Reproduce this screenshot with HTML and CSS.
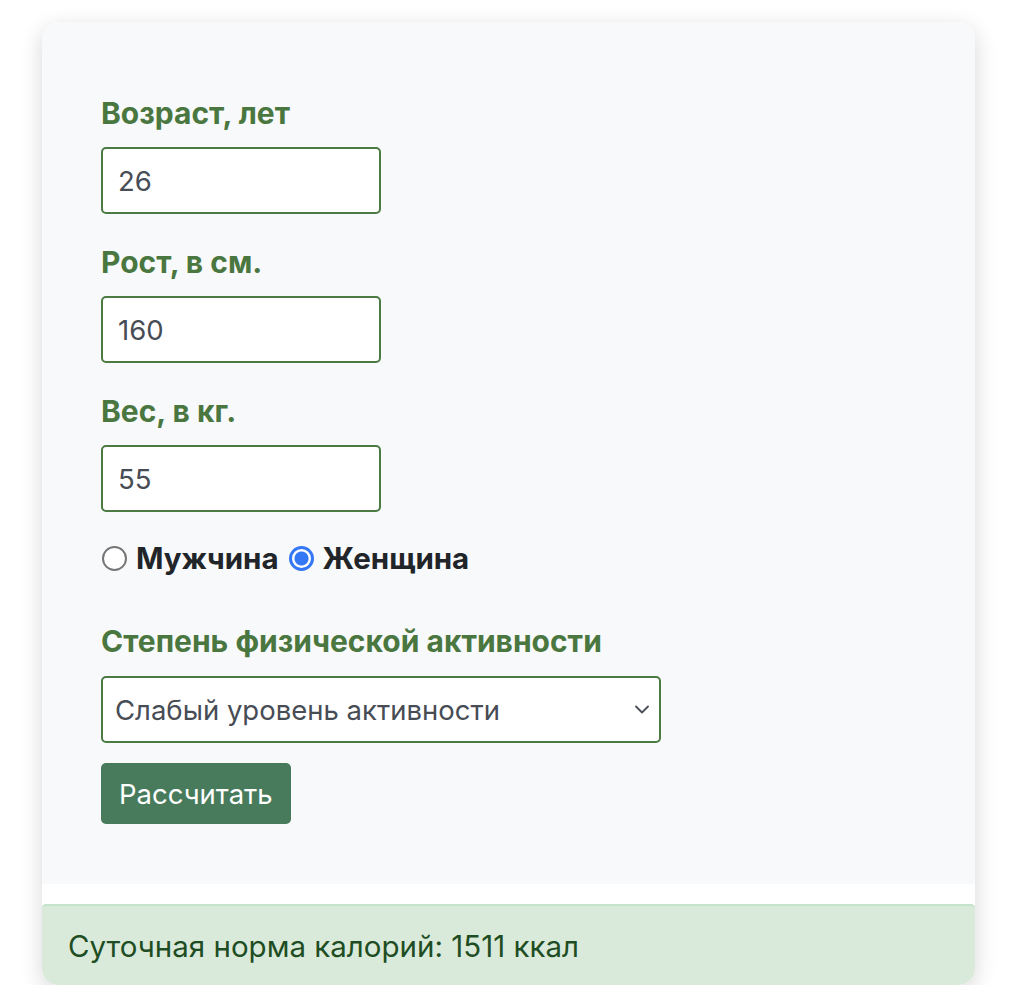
FILE: index.html
```html
<!DOCTYPE html>
<html lang="ru">
<head>
<meta charset="utf-8">
<title>Калькулятор калорий</title>
<link rel="stylesheet" href="styles.css">
</head>
<body>
<div class="card">
  <form class="form">
    <div class="field">
      <label class="label" for="age">Возраст, лет</label>
      <input class="input" id="age" type="text" value="26">
    </div>
    <div class="field">
      <label class="label" for="height">Рост, в см.</label>
      <input class="input" id="height" type="text" value="160">
    </div>
    <div class="field">
      <label class="label" for="weight">Вес, в кг.</label>
      <input class="input" id="weight" type="text" value="55">
    </div>
    <div class="gender">
      <label class="radio"><span class="dot"></span>Мужчина</label>
      <label class="radio"><span class="dot checked"></span>Женщина</label>
    </div>
    <div class="field activity">
      <label class="label" for="act">Степень физической активности</label>
      <div class="select">
        <span>Слабый уровень активности</span>
        <svg class="chev" width="14" height="9" viewBox="0 0 14 9"><path d="M1 1.5 L7 7.5 L13 1.5" fill="none" stroke="#4a4f57" stroke-width="1.8" stroke-linecap="round" stroke-linejoin="round"/></svg>
      </div>
    </div>
    <button class="btn" type="button">Рассчитать</button>
  </form>
  <div class="spacer"></div>
  <div class="alert">Суточная норма калорий: 1511 ккал</div>
</div>
</body>
</html>
```
FILE: styles.css
```css
html, body {
  margin: 0;
  padding: 0;
  background: #ffffff;
}
body {
  font-family: Inter, "Liberation Sans", Arial, sans-serif;
  padding: 22px 43px 0 42px;
}
.card {
  width: 933px;
  border-radius: 16px;
  overflow: hidden;
  box-shadow: 0 6px 22px rgba(0, 0, 0, 0.16);
  background: #ffffff;
}
.form {
  background: #f8f9fa;
  padding: 73px 60px 60px 59px;
  display: flex;
  flex-direction: column;
  align-items: flex-start;
}
.field {
  display: flex;
  flex-direction: column;
  align-items: flex-start;
  margin-bottom: 30px;
}
.label {
  color: #4a773f;
  font-weight: 700;
  font-size: 30px;
  line-height: 36px;
  margin-bottom: 16px;
}
.input {
  width: 280px;
  height: 67px;
  box-sizing: border-box;
  border: 2px solid #4b7a43;
  border-radius: 5px;
  background: #ffffff;
  padding: 0 15px;
  font-family: Inter, "Liberation Sans", Arial, sans-serif;
  font-size: 27.5px;
  color: #474c55;
  outline: none;
}
.gender {
  display: flex;
  align-items: center;
  margin-top: -2px;
  margin-bottom: 47px;
  height: 36px;
}
.radio {
  display: flex;
  align-items: center;
  font-weight: 700;
  font-size: 29.5px;
  color: #212529;
  margin-right: 9px;
}
.dot {
  width: 21px;
  height: 21px;
  border: 2px solid #767676;
  border-radius: 50%;
  background: #ffffff;
  margin-right: 9px;
  margin-left: 1px;
  box-sizing: content-box;
}
.dot.checked {
  border: 3px solid #3478f6;
  width: 19px;
  height: 19px;
  background: radial-gradient(circle, #3478f6 0 6.5px, #ffffff 7.5px);
}
.activity {
  margin-bottom: 20px;
}
.activity .label {
  margin-bottom: 17px;
}
.select {
  width: 560px;
  height: 67px;
  box-sizing: border-box;
  border: 2px solid #4b7a43;
  border-radius: 5px;
  background: #ffffff;
  display: flex;
  align-items: center;
  justify-content: space-between;
  padding: 0 10px 0 12px;
  font-size: 27.5px;
  color: #474c55;
}
.chev {
  display: block;
}
.btn {
  background: #477b5b;
  color: #ffffff;
  border: none;
  border-radius: 5px;
  height: 61px;
  padding: 0 18px;
  font-family: Inter, "Liberation Sans", Arial, sans-serif;
  font-size: 27.5px;
}
.spacer {
  height: 20px;
  background: #ffffff;
}
.alert {
  background: #d9eadb;
  border-top: 2px solid #c6e3cb;
  color: #1f4d23;
  font-family: Inter, "Liberation Sans", sans-serif;
  font-size: 29.5px;
  height: 79px;
  display: flex;
  align-items: center;
  padding: 0 26px;
  border-radius: 4px 4px 16px 16px;
}
```
